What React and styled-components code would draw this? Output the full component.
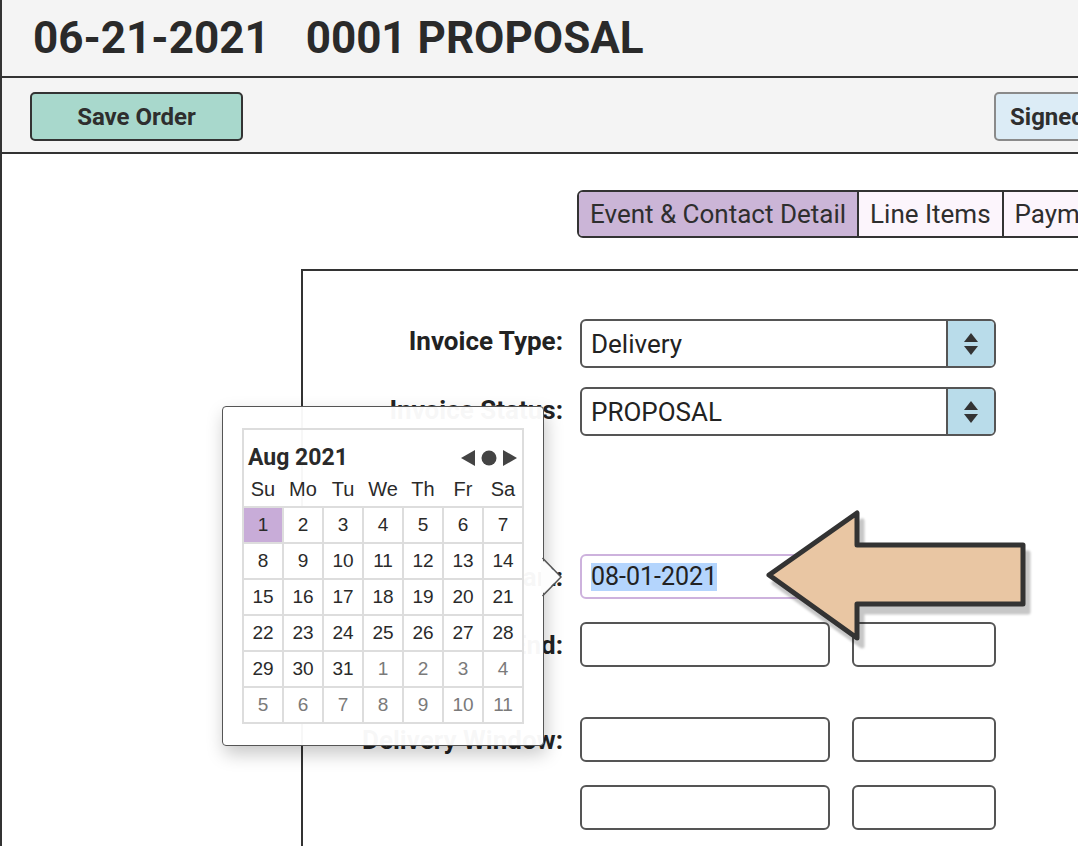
import React from "react";
import styled, { createGlobalStyle } from "styled-components";

const GlobalStyle = createGlobalStyle`
  html, body {
    margin: 0;
    padding: 0;
    background: #ffffff;
  }
  body {
    font-family: Roboto, "Liberation Sans", sans-serif;
    color: #2b2b2b;
    overflow: hidden;
  }
`;

const Page = styled.div`
  position: relative;
  width: 1078px;
  height: 846px;
  box-sizing: border-box;
  border-left: 2px solid #333;
  overflow: hidden;
`;

const TitleBar = styled.header`
  height: 76px;
  display: flex;
  align-items: center;
  gap: 36px;
  padding-left: 31px;
  background: #f4f4f4;
  border-bottom: 2px solid #333;
  font-size: 44px;
  font-weight: 700;
  color: #2a2a2a;
  white-space: nowrap;
`;

const Toolbar = styled.div`
  width: 1180px;
  height: 76px;
  box-sizing: border-box;
  display: flex;
  align-items: center;
  justify-content: space-between;
  padding: 2px 28px 0;
  background: #f4f4f4;
  border-bottom: 2px solid #333;
`;

const ToolButton = styled.button`
  height: 49px;
  width: ${({ $w }) => $w}px;
  box-sizing: border-box;
  border: 2px solid ${({ $edge }) => $edge};
  border-radius: 5px;
  background: ${({ $bg }) => $bg};
  font-family: Roboto, sans-serif;
  font-size: 24px;
  font-weight: 700;
  color: #2e2e2e;
  text-align: ${({ $left }) => ($left ? "left" : "center")};
  padding: ${({ $left }) => ($left ? "2px 0 0 14px" : "2px 0 0")};
`;

const Content = styled.main`
  padding-top: 36px;
`;

const Tabs = styled.nav`
  display: flex;
  width: 640px;
  margin-left: 575px;
  border: 2px solid #333;
  border-radius: 6px 0 0 6px;
  overflow: hidden;
`;

const Tab = styled.div`
  height: 44px;
  display: flex;
  align-items: center;
  padding: 0 11px;
  font-size: 26px;
  color: #2e2e2e;
  white-space: nowrap;
  background: ${({ $active }) => ($active ? "#cbb5d7" : "#fcf5fc")};
  & + & {
    border-left: 2px solid #333;
  }
  &:last-child {
    flex: 1;
  }
`;

const Panel = styled.section`
  width: 900px;
  height: 620px;
  margin: 31px 0 0 299px;
  padding-top: 48px;
  border-top: 2px solid #333;
  border-left: 2px solid #333;
`;

const Row = styled.div`
  display: grid;
  grid-template-columns: 260px auto;
  column-gap: 17px;
  align-items: center;
  margin-top: ${({ $mt }) => $mt || 0}px;
`;

const Label = styled.label`
  text-align: right;
  font-size: 26px;
  font-weight: 700;
  color: #222;
  white-space: nowrap;
  padding-bottom: ${({ $lift }) => $lift || 0}px;
`;

const Controls = styled.div`
  display: flex;
  gap: 22px;
`;

const Select = styled.div`
  width: 416px;
  height: 49px;
  box-sizing: border-box;
  display: flex;
  border: 2px solid #555;
  border-radius: 6px;
  overflow: hidden;
  background: #fff;
`;

const SelectValue = styled.div`
  flex: 1;
  display: flex;
  align-items: center;
  padding-left: 9px;
  font-size: 26px;
  color: #222;
`;

const Spinner = styled.div`
  width: 46px;
  display: flex;
  flex-direction: column;
  align-items: center;
  justify-content: center;
  gap: 4px;
  background: #b9dcea;
  border-left: 2px solid #555;
`;

const Input = styled.div`
  width: ${({ $w }) => $w}px;
  height: 45px;
  box-sizing: border-box;
  display: flex;
  align-items: center;
  padding-left: 9px;
  border: 2px solid ${({ $focus }) => ($focus ? "#cdb2dd" : "#555")};
  border-radius: 6px;
  background: #fff;
  font-size: 25px;
  color: #222;
`;

const Selected = styled.span`
  background: #b4d5fd;
  line-height: 28px;
`;

const Popover = styled.div`
  position: absolute;
  left: 220px;
  top: 406px;
  padding: 21px 19px 21px 19px;
  border: 1.5px solid #555;
  border-radius: 4px;
  background: rgba(255, 255, 255, 0.965);
  box-shadow: 2px 8px 18px rgba(0, 0, 0, 0.22);
`;

const Pointer = styled.svg`
  position: absolute;
  right: -21px;
  top: 150px;
`;

const Calendar = styled.div`
  width: 278px;
  border: 2px solid #ddd;
  font-family: "Liberation Sans", Arial, sans-serif;
  color: #2a2a2a;
`;

const CalHead = styled.div`
  height: 43px;
  display: flex;
  align-items: flex-end;
  justify-content: space-between;
  padding: 0 5px 0 4px;
`;

const Month = styled.div`
  font-family: Roboto, sans-serif;
  font-size: 23px;
  font-weight: 700;
  color: #2a2a2a;
  line-height: 30px;
`;

const Nav = styled.div`
  display: flex;
  align-items: center;
  gap: 6px;
  height: 30px;
`;

const WeekRow = styled.div`
  display: grid;
  grid-template-columns: repeat(7, 38px);
  column-gap: 2px;
  height: 33px;
  align-items: center;
  font-size: 20px;
  text-align: center;
`;

const Days = styled.div`
  display: grid;
  grid-template-columns: repeat(7, 38px);
  grid-auto-rows: 34px;
  gap: 2px;
  border-top: 2px solid #ddd;
  background: #ddd;
`;

const Day = styled.div`
  display: flex;
  align-items: center;
  justify-content: center;
  font-size: 19px;
  background: ${({ $sel }) => ($sel ? "#c8acd8" : "#fff")};
  color: ${({ $out }) => ($out ? "#7a7a7a" : "#2a2a2a")};
`;

const BigArrow = styled.svg`
  position: absolute;
  left: 748px;
  top: 500px;
  filter: drop-shadow(5px 8px 1px rgba(0, 0, 0, 0.22));
`;

const weekNames = ["Su", "Mo", "Tu", "We", "Th", "Fr", "Sa"];

const days = [
  ...Array.from({ length: 31 }, (_, i) => ({ n: i + 1, out: false })),
  ...Array.from({ length: 11 }, (_, i) => ({ n: i + 1, out: true })),
];

function Arrows() {
  return (
    <>
      <svg width="14" height="9" viewBox="0 0 14 9">
        <polygon points="7,0 14,9 0,9" fill="#333" />
      </svg>
      <svg width="14" height="9" viewBox="0 0 14 9">
        <polygon points="0,0 14,0 7,9" fill="#333" />
      </svg>
    </>
  );
}

function DropSelect({ value }) {
  return (
    <Select>
      <SelectValue>{value}</SelectValue>
      <Spinner>
        <Arrows />
      </Spinner>
    </Select>
  );
}

export default function App() {
  return (
    <>
      <GlobalStyle />
      <Page>
        <TitleBar>
          <span>06-21-2021</span>
          <span>0001 PROPOSAL</span>
        </TitleBar>
        <Toolbar>
          <ToolButton $w={213} $bg="#a8d8cc" $edge="#333">
            Save Order
          </ToolButton>
          <ToolButton $w={160} $bg="#dcecf6" $edge="#8a8a8a" $left>
            Signed
          </ToolButton>
        </Toolbar>

        <Content>
          <Tabs>
            <Tab $active>Event &amp; Contact Detail</Tab>
            <Tab>Line Items</Tab>
            <Tab>Payments</Tab>
          </Tabs>

          <Panel>
            <Row>
              <Label $lift={6}>Invoice Type:</Label>
              <DropSelect value="Delivery" />
            </Row>
            <Row $mt={19}>
              <Label $lift={4}>Invoice Status:</Label>
              <DropSelect value="PROPOSAL" />
            </Row>
            <Row $mt={118}>
              <Label>Event Start:</Label>
              <Controls>
                <Input $w={250} $focus>
                  <Selected>08-01-2021</Selected>
                </Input>
                <Input $w={144} />
              </Controls>
            </Row>
            <Row $mt={23}>
              <Label>Event End:</Label>
              <Controls>
                <Input $w={250} />
                <Input $w={144} />
              </Controls>
            </Row>
            <Row $mt={50}>
              <Label>Delivery Window:</Label>
              <Controls>
                <Input $w={250} />
                <Input $w={144} />
              </Controls>
            </Row>
            <Row $mt={23}>
              <Label />
              <Controls>
                <Input $w={250} />
                <Input $w={144} />
              </Controls>
            </Row>
          </Panel>
        </Content>

        <Popover>
          <Pointer width="23" height="40" viewBox="0 0 23 40">
            <polygon points="0,2 20,20 0,38" fill="#fdfdfd" />
            <polyline
              points="1.5,1 20,20 1.5,39"
              fill="none"
              stroke="#555"
              strokeWidth="1.5"
            />
          </Pointer>
          <Calendar>
            <CalHead>
              <Month>Aug 2021</Month>
              <Nav>
                <svg width="14" height="16" viewBox="0 0 14 16">
                  <polygon points="0,8 14,0 14,16" fill="#444" />
                </svg>
                <svg width="16" height="16" viewBox="0 0 16 16">
                  <circle cx="8" cy="8" r="7.5" fill="#444" />
                </svg>
                <svg width="14" height="16" viewBox="0 0 14 16">
                  <polygon points="14,8 0,0 0,16" fill="#444" />
                </svg>
              </Nav>
            </CalHead>
            <WeekRow>
              {weekNames.map((w) => (
                <span key={w}>{w}</span>
              ))}
            </WeekRow>
            <Days>
              {days.map((d, i) => (
                <Day key={i} $out={d.out} $sel={i === 0}>
                  {d.n}
                </Day>
              ))}
            </Days>
          </Calendar>
        </Popover>

        <BigArrow width="285" height="150" viewBox="0 0 285 150">
          <polygon
            points="19,75 107,13 107,45 273,45 273,104 107,104 107,138"
            fill="#e9c6a3"
            stroke="#333"
            strokeWidth="5"
            strokeLinejoin="round"
          />
        </BigArrow>
      </Page>
    </>
  );
}
